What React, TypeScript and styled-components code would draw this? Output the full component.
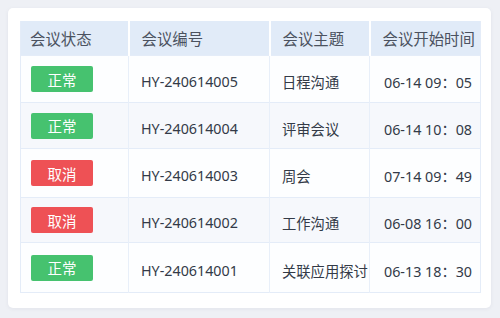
import React from 'react'
import styled, { createGlobalStyle } from 'styled-components'

const GlobalStyle = createGlobalStyle`
  body {
    margin: 0;
    background: #eef0f5;
    font-family: "Noto Sans", "Noto Sans CJK SC", sans-serif;
  }
`

const Page = styled.div`
  width: 500px;
  height: 318px;
  padding: 8px 9px 10px 8px;
  box-sizing: border-box;
`

const Card = styled.div`
  height: 300px;
  background: #fff;
  border-radius: 5px;
  box-shadow: 0 1px 4px rgba(30, 40, 70, 0.06);
  padding: 13px 11px 0 12px;
  box-sizing: border-box;
`

const Table = styled.table`
  width: 460px;
  table-layout: fixed;
  border-collapse: collapse;
  border: 1px solid #e4ecf8;
  border-top: none;
`

const HeadCell = styled.th<{ $pad?: number }>`
  height: 34px;
  padding: 0 0 0 ${(p) => p.$pad ?? 12}px;
  background: #e1ebf8;
  border-left: 2px solid #fff;
  color: #4b5260;
  font-size: 15.4px;
  font-weight: normal;
  text-align: left;
  white-space: nowrap;
  overflow: hidden;

  &:first-child {
    border-left: none;
  }
`

const Row = styled.tr<{ $striped: boolean }>`
  background: ${(p) => (p.$striped ? '#f6f8fc' : '#fdfeff')};
  border-top: 1px solid #e4ecf8;
`

const Cell = styled.td<{ $pad?: number; $h: number }>`
  height: ${(p) => p.$h}px;
  padding: 5px 0 0 ${(p) => p.$pad ?? 12}px;
  border-left: 1px solid #e8eff9;
  color: #333a47;
  font-size: 14.3px;
  white-space: nowrap;
  overflow: hidden;
  box-sizing: border-box;

  &:first-child {
    border-left: none;
  }
`

const BadgeCell = styled.td<{ $h: number }>`
  height: ${(p) => p.$h}px;
  padding: 0 0 0 10px;
  box-sizing: border-box;
`

const Badge = styled.span<{ $kind: 'ok' | 'cancel' }>`
  display: flex;
  align-items: center;
  justify-content: center;
  width: 62px;
  height: 26px;
  border-radius: 2px;
  background: ${(p) => (p.$kind === 'ok' ? '#46c26f' : '#ee5155')};
  color: #fff;
  font-size: 14.5px;
`

const rows = [
  { ok: true, id: 'HY-240614005', topic: '日程沟通', time: '06-14 09：05', h: 47 },
  { ok: true, id: 'HY-240614004', topic: '评审会议', time: '06-14 10：08', h: 46 },
  { ok: false, id: 'HY-240614003', topic: '周会', time: '07-14 09：49', h: 49 },
  { ok: false, id: 'HY-240614002', topic: '工作沟通', time: '06-08 16：00', h: 45 },
  { ok: true, id: 'HY-240614001', topic: '关联应用探讨', time: '06-13 18：30', h: 50 },
]

export default function App() {
  return (
    <>
      <GlobalStyle />
      <Page>
        <Card>
          <Table>
            <colgroup>
              <col style={{ width: 108 }} />
              <col style={{ width: 141 }} />
              <col style={{ width: 100 }} />
              <col style={{ width: 111 }} />
            </colgroup>
            <thead>
              <tr>
                <HeadCell $pad={9}>会议状态</HeadCell>
                <HeadCell>会议编号</HeadCell>
                <HeadCell>会议主题</HeadCell>
                <HeadCell $pad={12}>会议开始时间</HeadCell>
              </tr>
            </thead>
            <tbody>
              {rows.map((r, i) => (
                <Row key={r.id} $striped={i % 2 === 1}>
                  <BadgeCell $h={r.h}>
                    <Badge $kind={r.ok ? 'ok' : 'cancel'}>{r.ok ? '正常' : '取消'}</Badge>
                  </BadgeCell>
                  <Cell $h={r.h}>{r.id}</Cell>
                  <Cell $h={r.h}>{r.topic}</Cell>
                  <Cell $h={r.h} $pad={14}>{r.time}</Cell>
                </Row>
              ))}
            </tbody>
          </Table>
        </Card>
      </Page>
    </>
  )
}
